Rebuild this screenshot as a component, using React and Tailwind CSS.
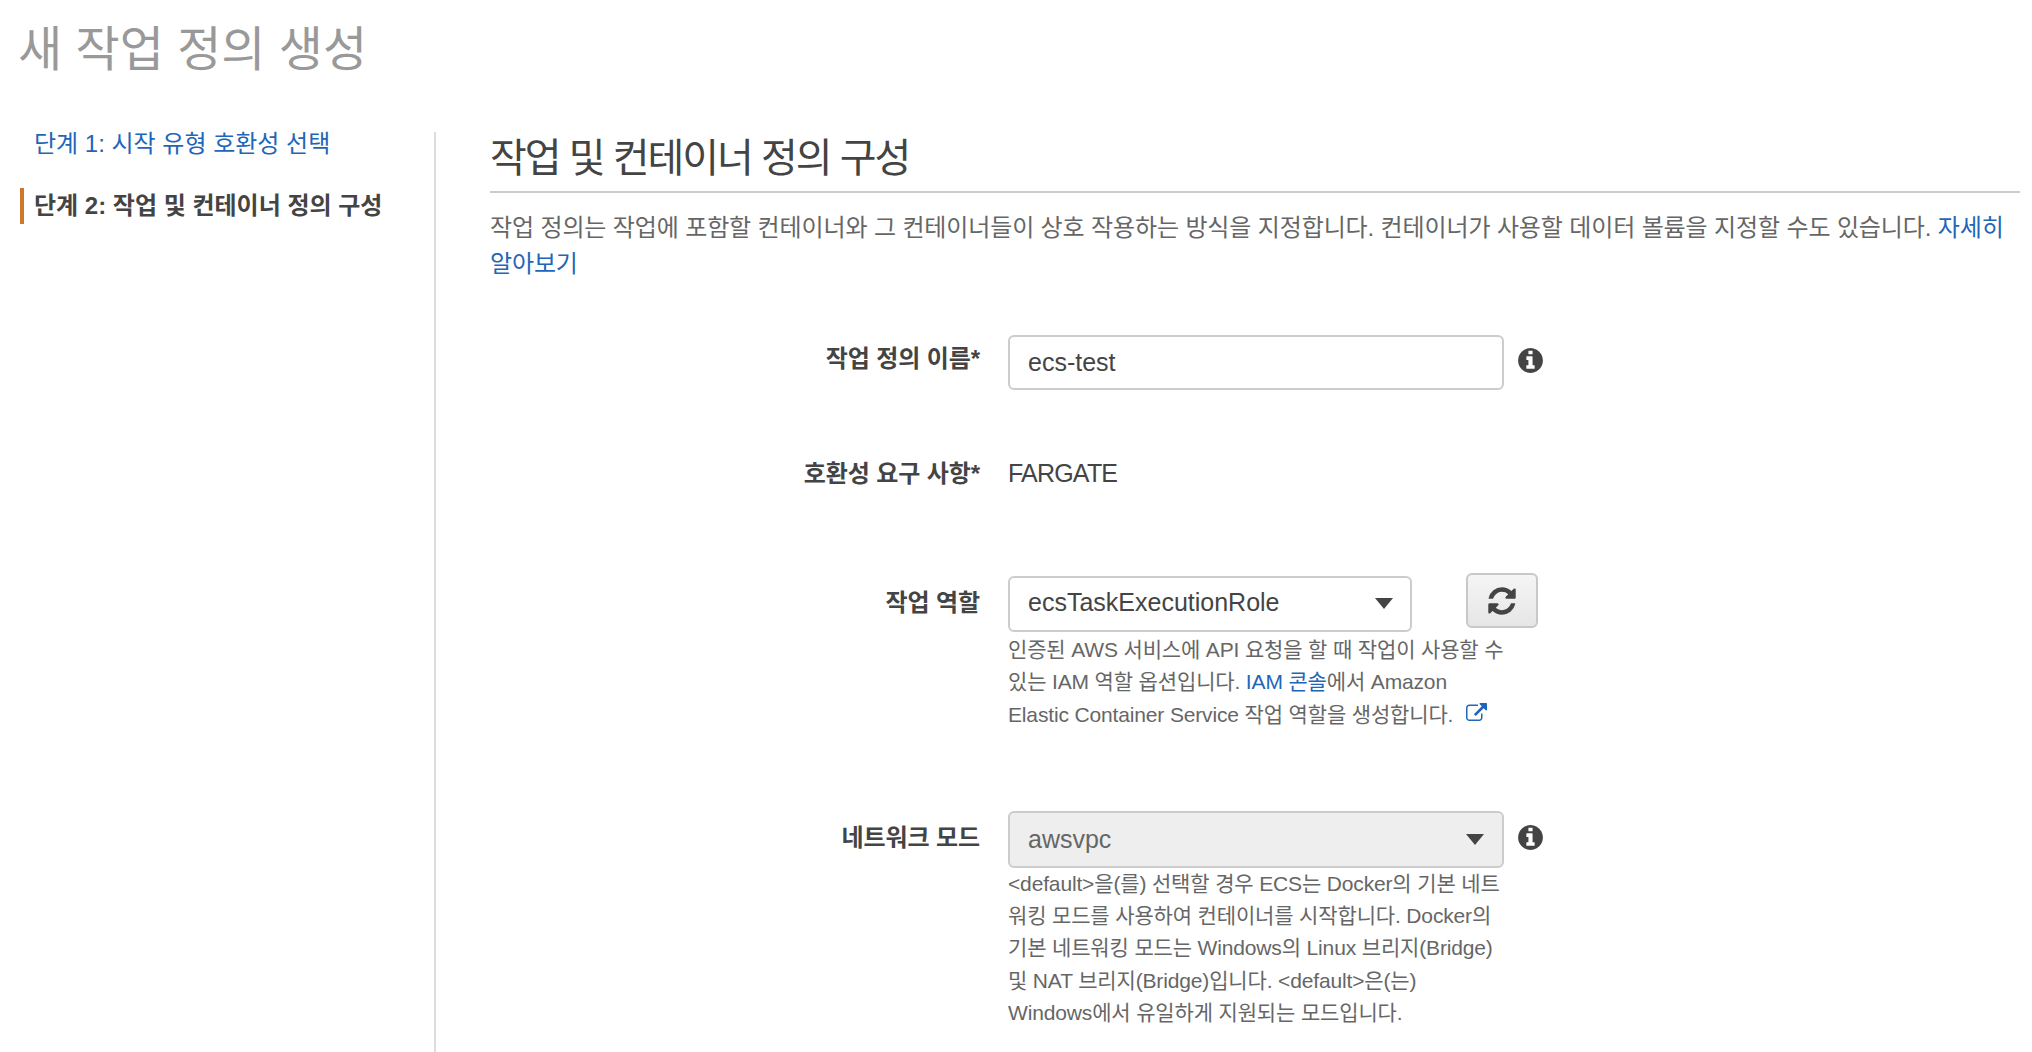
import React from 'react';

const Caret = ({ className }) => (
  <svg viewBox="0 0 20 12" className={className}>
    <path d="M0 0h20L10 12z" fill="currentColor" />
  </svg>
);

const Label = ({ children, top }) => (
  <div className={`w-[518px] shrink-0 pr-[28px] text-right text-[24px] leading-[36px] font-bold text-[#444] whitespace-nowrap tracking-[-0.1px] ${top}`}>
    {children}
  </div>
);

const Help = ({ children }) => (
  <div className="text-[21px] leading-[32.3px] text-[#666] whitespace-nowrap tracking-[-0.15px]">{children}</div>
);

const Info = () => (
  <svg viewBox="0 0 1792 1792" className="w-[29px] h-[29px] text-[#444] shrink-0">
    <path fill="currentColor" d="M1152 1376v-160q0-14-9-23t-23-9h-96v-512q0-14-9-23t-23-9h-320q-14 0-23 9t-9 23v160q0 14 9 23t23 9h96v320h-96q-14 0-23 9t-9 23v160q0 14 9 23t23 9h448q14 0 23-9t9-23zm-128-896v-160q0-14-9-23t-23-9h-192q-14 0-23 9t-9 23v160q0 14 9 23t23 9h192q14 0 23-9t9-23zm640 416q0 209-103 385.5t-279.5 279.5-385.5 103-385.5-103-279.5-279.5-103-385.5 103-385.5 279.5-279.5 385.5-103 385.5 103 279.5 279.5 103 385.5z" />
  </svg>
);

const Refresh = () => (
  <svg viewBox="0 0 1792 1792" className="w-[32px] h-[32px] text-[#444]">
    <path fill="currentColor" d="M1639 1056q0 5-1 7-64 268-268 434.5t-478 166.5q-146 0-282.5-55t-243.5-157l-129 129q-19 19-45 19t-45-19-19-45v-448q0-26 19-45t45-19h448q26 0 45 19t19 45-19 45l-137 137q71 66 161 102t187 36q134 0 250-65t186-179q11-17 53-117 8-23 30-23h192q13 0 22.5 9.5t9.5 22.5zm25-800v448q0 26-19 45t-45 19h-448q-26 0-45-19t-19-45 19-45l138-138q-148-137-349-137-134 0-250 65t-186 179q-11 17-53 117-8 23-30 23h-199q-13 0-22.5-9.5t-9.5-22.5v-7q65-268 270-434.5t480-166.5q146 0 284 55.5t245 156.5l130-129q19-19 45-19t45 19 19 45z" />
  </svg>
);

const ExternalIcon = () => (
  <svg viewBox="0 0 1792 1792" className="inline-block ml-[13px] -mt-[6px] w-[21px] h-[21px] text-[#1f66b8]">
    <path fill="currentColor" d="M1408 928v320q0 119-84.5 203.5t-203.5 84.5h-832q-119 0-203.5-84.5t-84.5-203.5v-832q0-119 84.5-203.5t203.5-84.5h704q14 0 23 9t9 23v64q0 14-9 23t-23 9h-704q-66 0-113 47t-47 113v832q0 66 47 113t113 47h832q66 0 113-47t47-113v-320q0-14 9-23t23-9h64q14 0 23 9t9 23zm384-864v512q0 26-19 45t-45 19-45-19l-176-176-652 652q-10 10-23 10t-23-10l-114-114q-10-10-10-23t10-23l652-652-176-176q-19-19-19-45t19-45 45-19h512q26 0 45 19t19 45z" />
  </svg>
);

export default function App() {
  return (
    <div className="w-[2032px] h-[1052px] overflow-hidden bg-white font-['Liberation_Sans','Noto_Sans_CJK_KR',sans-serif]">
      <h1 className="pl-[18px] pt-[18px] h-[132px] text-[48px] leading-[64px] font-normal text-[#999]">새 작업 정의 생성</h1>

      <div className="flex">
        {/* Steps */}
        <div className="w-[436px] h-[920px] shrink-0 border-r-2 border-[#ddd] pl-[20px] text-[24px] leading-[36px]">
          <div className="pl-[14px] h-[36px] text-[#1f66b8] -mt-[6px]">단계 1: 시작 유형 호환성 선택</div>
          <div className="mt-[26px] pl-[10px] border-l-4 border-[#d0782a] font-bold text-[#444]">단계 2: 작업 및 컨테이너 정의 구성</div>
        </div>

        {/* Form */}
        <div className="w-[1530px] ml-[54px]">
          <h2 className="text-[40px] leading-[48px] pt-[2px] pb-[9px] font-normal text-[#444] border-b-2 border-[#ccc] tracking-[-2px]">작업 및 컨테이너 정의 구성</h2>
          <p className="mt-[17px] text-[24px] leading-[36px] text-[#666] tracking-[-0.13px] whitespace-nowrap">
            작업 정의는 작업에 포함할 컨테이너와 그 컨테이너들이 상호 작용하는 방식을 지정합니다. 컨테이너가 사용할 데이터 볼륨을 지정할 수도 있습니다. <a className="text-[#1f66b8]">자세히</a>
            <br />
            <a className="text-[#1f66b8]">알아보기</a>
          </p>

          <div className="flex items-start mt-[53px]">
            <Label top="mt-[6px]">작업 정의 이름*</Label>
            <div className="w-[496px] h-[55px] rounded-[6px] border-2 border-[#ccc] flex items-center pl-[18px] text-[25px] text-[#444] bg-white">ecs-test</div>
            <div className="ml-[12px] mt-[11px]"><Info /></div>
          </div>

          <div className="flex items-start mt-[65px]">
            <Label top="mt-[1px]">호환성 요구 사항*</Label>
            <div className="text-[25px] leading-[36px] text-[#444] tracking-[-0.8px]">FARGATE</div>
          </div>

          <div className="flex items-start mt-[84px]">
            <Label top="mt-[9px]">작업 역할</Label>
            <div className="w-[496px]">
              <div className="flex items-start">
                <div className="w-[404px] h-[56px] shrink-0 rounded-[6px] border-2 border-[#ccc] flex items-center justify-between pl-[18px] pr-[17px] pb-[2px] text-[25px] text-[#444] bg-white">
                  ecsTaskExecutionRole
                  <Caret className="w-[18px] h-[11px] text-[#444]" />
                </div>
                <button className="ml-[54px] -mt-[3px] w-[72px] h-[55px] shrink-0 rounded-[6px] border-2 border-[#c8c8c8] bg-gradient-to-b from-[#f5f5f5] to-[#e6e6e6] flex items-center justify-center">
                  <Refresh />
                </button>
              </div>
              <div className="mt-[2px]">
                <Help>
                  인증된 AWS 서비스에 API 요청을 할 때 작업이 사용할 수<br />
                  있는 IAM 역할 옵션입니다. <a className="text-[#1f66b8]">IAM 콘솔</a>에서 Amazon<br />
                  Elastic Container Service 작업 역할을 생성합니다.
                  <ExternalIcon />
                </Help>
              </div>
            </div>
          </div>

          <div className="flex items-start mt-[80px]">
            <Label top="mt-[9px]">네트워크 모드</Label>
            <div className="w-[496px]">
              <div className="h-[57px] rounded-[6px] border-2 border-[#ccc] flex items-center justify-between pl-[18px] pr-[18px] text-[25px] text-[#666] bg-[#eee]">
                awsvpc
                <Caret className="w-[18px] h-[11px] text-[#444]" />
              </div>
              <div>
                <Help>
                  &lt;default&gt;을(를) 선택할 경우 ECS는 Docker의 기본 네트<br />
                  워킹 모드를 사용하여 컨테이너를 시작합니다. Docker의<br />
                  기본 네트워킹 모드는 Windows의 Linux 브리지(Bridge)<br />
                  및 NAT 브리지(Bridge)입니다. &lt;default&gt;은(는)<br />
                  Windows에서 유일하게 지원되는 모드입니다.
                </Help>
              </div>
            </div>
            <div className="ml-[12px] mt-[12px]"><Info /></div>
          </div>
        </div>
      </div>
    </div>
  );
}
